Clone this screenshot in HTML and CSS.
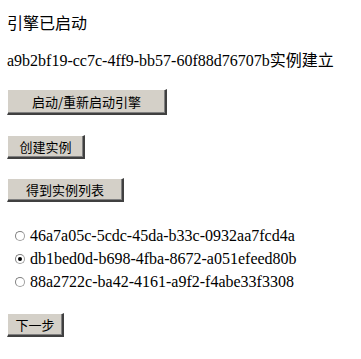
FILE: index.html
```html
<!DOCTYPE html>
<html>
<head>
<meta charset="utf-8">
<link rel="stylesheet" href="styles.css">
</head>
<body>
<div class="page">
  <div class="status">引擎已启动</div>
  <div class="created">a9b2bf19-cc7c-4ff9-bb57-60f88d76707b实例建立</div>
  <div class="row r1"><button class="btn b-restart">启动/重新启动引擎</button></div>
  <div class="row r2"><button class="btn b-create">创建实例</button></div>
  <div class="row r3"><button class="btn b-list">得到实例列表</button></div>
  <div class="list">
    <label class="opt"><input type="radio" name="inst" class="radio"><span>46a7a05c-5cdc-45da-b33c-0932aa7fcd4a</span></label>
    <label class="opt"><input type="radio" name="inst" class="radio" checked><span>db1bed0d-b698-4fba-8672-a051efeed80b</span></label>
    <label class="opt"><input type="radio" name="inst" class="radio"><span>88a2722c-ba42-4161-a9f2-f4abe33f3308</span></label>
  </div>
  <div class="row r4"><button class="btn b-next">下一步</button></div>
</div>
</body>
</html>
```
FILE: styles.css
```css
html, body {
  margin: 0;
  padding: 0;
  background: #ffffff;
}
body {
  font-family: "Liberation Serif", "Noto Sans CJK SC", serif;
  font-size: 16px;
  color: #000000;
}
.page {
  padding: 13px 0 0 7px;
}
.status {
  font-family: "Noto Sans CJK SC", sans-serif;
  font-size: 16px;
  line-height: 19px;
  height: 19px;
}
.created {
  margin-top: 19px;
  line-height: 19px;
  height: 19px;
  white-space: nowrap;
}
.row {
  display: flex;
}
.r1 { margin-top: 19px; }
.r2 { margin-top: 20px; }
.r3 { margin-top: 19px; }
.r4 { margin-top: 20px; }
.btn {
  font-family: "Noto Sans CJK SC", sans-serif;
  font-size: 13px;
  line-height: 15px;
  background: #d4d0c8;
  color: #000;
  border-style: solid;
  border-width: 1px 2px 2px 1px;
  border-color: #ffffff #404040 #404040 #ffffff;
  box-shadow: inset -1px -1px 0 #808080;
  height: 24px;
  padding: 0;
  margin: 0;
  display: flex;
  align-items: center;
  justify-content: center;
}
.b-restart { width: 160px; height: 26px; }
.b-create { width: 78px; }
.b-list { width: 117px; }
.b-next { width: 57px; }
.list {
  margin-top: 22px;
  padding-left: 8px;
  display: flex;
  flex-direction: column;
}
.opt {
  display: flex;
  align-items: center;
  height: 23px;
  line-height: 23px;
  white-space: nowrap;
}
.radio {
  appearance: none;
  -webkit-appearance: none;
  width: 10px;
  height: 10px;
  margin: 0 5px 0 0;
  border: 1px solid #a0a0a0;
  border-top-color: #808080;
  border-left-color: #808080;
  border-radius: 50%;
  background: #ffffff;
  position: relative;
  flex: none;
}
.radio:checked::after {
  content: "";
  position: absolute;
  left: 2px;
  top: 2px;
  width: 4px;
  height: 4px;
  border-radius: 50%;
  background: #000000;
}
```
